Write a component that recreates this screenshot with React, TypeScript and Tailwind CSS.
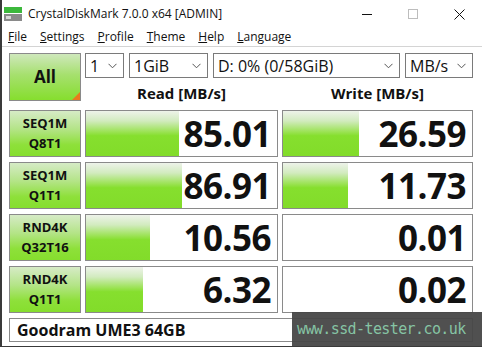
import React from 'react';

const rows = [
  { a: 'SEQ1M', b: 'Q8T1', read: '85.01', write: '26.59', rw: 93, ww: 76 },
  { a: 'SEQ1M', b: 'Q1T1', read: '86.91', write: '11.73', rw: 96, ww: 65 },
  { a: 'RND4K', b: 'Q32T16', read: '10.56', write: '0.01', rw: 64, ww: 0 },
  { a: 'RND4K', b: 'Q1T1', read: '6.32', write: '0.02', rw: 57, ww: 0 },
];

const barBg =
  'bg-[linear-gradient(to_bottom,#eef3ea_0%,#d2ebbf_22%,#9ee35a_45%,#86df2e_55%,#82dc2a_100%)]';

function Chevron() {
  return (
    <svg width="9" height="6" viewBox="0 0 9 6" className="shrink-0">
      <path d="M0.5 0.8 L4.5 4.8 L8.5 0.8" fill="none" stroke="#555" strokeWidth="1" />
    </svg>
  );
}

function Select({ label, w }: { label: string; w: string }) {
  return (
    <div className={`${w} h-[25px] flex items-center justify-between border border-[#7a7a7a] bg-white pl-[4px] pr-[6px] text-[16px] text-[#111]`}>
      <span className="leading-none">{label}</span>
      <Chevron />
    </div>
  );
}

function ValueBox({ value, width }: { value: string; width: number }) {
  return (
    <div className="relative h-[47px] border border-[#8a8a8a] bg-white overflow-hidden">
      {width > 0 && (
        <div className={`absolute left-0 top-0 bottom-0 ${barBg}`} style={{ width }} />
      )}
      <div className="relative h-full flex items-center justify-end pr-[6px] text-[35px] font-bold text-[#111] leading-none tracking-[-0.5px]">
        {value}
      </div>
    </div>
  );
}

export default function App() {
  return (
    <div className="w-[482px] h-[347px] bg-white overflow-hidden relative font-['Open_Sans',sans-serif] border-l-2 border-b border-[#3a3a3a] border-r-0">
      {/* title bar */}
      <div className="h-[28px] flex items-center">
        <svg width="18" height="16" viewBox="0 0 18 16" className="ml-[2px] mr-[6px]">
          <rect x="0" y="1" width="18" height="6" fill="#3cb83c" />
          <rect x="0" y="8" width="18" height="7" fill="#8a8a8a" />
          <rect x="2" y="10" width="5" height="3" fill="#d8d8d8" />
        </svg>
        <span className="text-[12px] text-[#111]">CrystalDiskMark 7.0.0 x64 [ADMIN]</span>
        <div className="ml-auto flex items-center h-full">
          <div className="w-[46px] flex justify-center">
            <div className="w-[10px] h-px bg-[#111]" />
          </div>
          <div className="w-[46px] flex justify-center">
            <div className="w-[10px] h-[10px] border border-[#bdbdbd]" />
          </div>
          <div className="w-[46px] flex justify-center">
            <svg width="11" height="11" viewBox="0 0 11 11">
              <path d="M0.5 0.5 L10.5 10.5 M10.5 0.5 L0.5 10.5" stroke="#111" strokeWidth="1" />
            </svg>
          </div>
        </div>
      </div>

      {/* menu */}
      <div className="h-[19px] flex items-center gap-[13px] pl-[6px] text-[12px] text-[#111] border-b border-[#d4d4d4]">
        <span><u>F</u>ile</span>
        <span><u>S</u>ettings</span>
        <span><u>P</u>rofile</span>
        <span><u>T</u>heme</span>
        <span><u>H</u>elp</span>
        <span><u>L</u>anguage</span>
      </div>

      <div className="pl-[7px] pt-[6px] flex flex-col gap-[5px]">
        {/* top controls */}
        <div className="flex gap-[4px]">
          <div className="relative w-[72px] h-[48px] border border-[#8a8a8a] bg-[linear-gradient(to_bottom,#cfe8bc_0%,#a6e06e_45%,#86de2e_100%)] flex items-center justify-center text-[17px] font-bold text-[#111]">
            All
            <div className="absolute right-0 bottom-0 w-0 h-0 border-l-[8px] border-l-transparent border-b-[8px] border-b-[#ea7a1e]" />
          </div>
          <div className="flex flex-col w-[388px]">
            <div className="flex gap-[5px]">
              <Select label="1" w="w-[39px]" />
              <Select label="1GiB" w="w-[79px]" />
              <Select label="D: 0% (0/58GiB)" w="w-[187px]" />
              <Select label="MB/s" w="w-[68px]" />
            </div>
            <div className="flex flex-1 items-center pt-[4px] text-[15px] font-bold text-[#111]">
              <div className="w-[193px] text-center">Read [MB/s]</div>
              <div className="w-[4px]" />
              <div className="w-[191px] text-center">Write [MB/s]</div>
            </div>
          </div>
        </div>

        {rows.map((r, i) => (
          <div key={i} className="grid grid-cols-[72px_193px_191px] gap-x-[4px]">
            <div className="h-[47px] border border-[#8a8a8a] bg-[linear-gradient(to_bottom,#d6ebc6_0%,#b4e488_40%,#8ee03a_75%,#86de2e_100%)] flex flex-col items-center justify-center text-[13px] font-bold text-[#111] leading-[20px]">
              <span>{r.a}</span>
              <span>{r.b}</span>
            </div>
            <ValueBox value={r.read} width={r.rw} />
            <ValueBox value={r.write} width={r.ww} />
          </div>
        ))}

        <div className="w-[464px] h-[24px] border border-[#8a8a8a] bg-white flex items-center pl-[7px] text-[16px] font-bold text-[#111]">
          Goodram UME3 64GB
        </div>
      </div>

      {/* watermark */}
      <div className="absolute left-[290px] top-[312px] w-[192px] h-[35px] bg-[#474747]/95 flex items-center">
        <span className="ml-[5px] font-['DejaVu_Sans_Mono',monospace] text-[15px] text-[#86c4a4] tracking-[-0.6px]">
          www.ssd-tester.co.uk
        </span>
      </div>
    </div>
  );
}
